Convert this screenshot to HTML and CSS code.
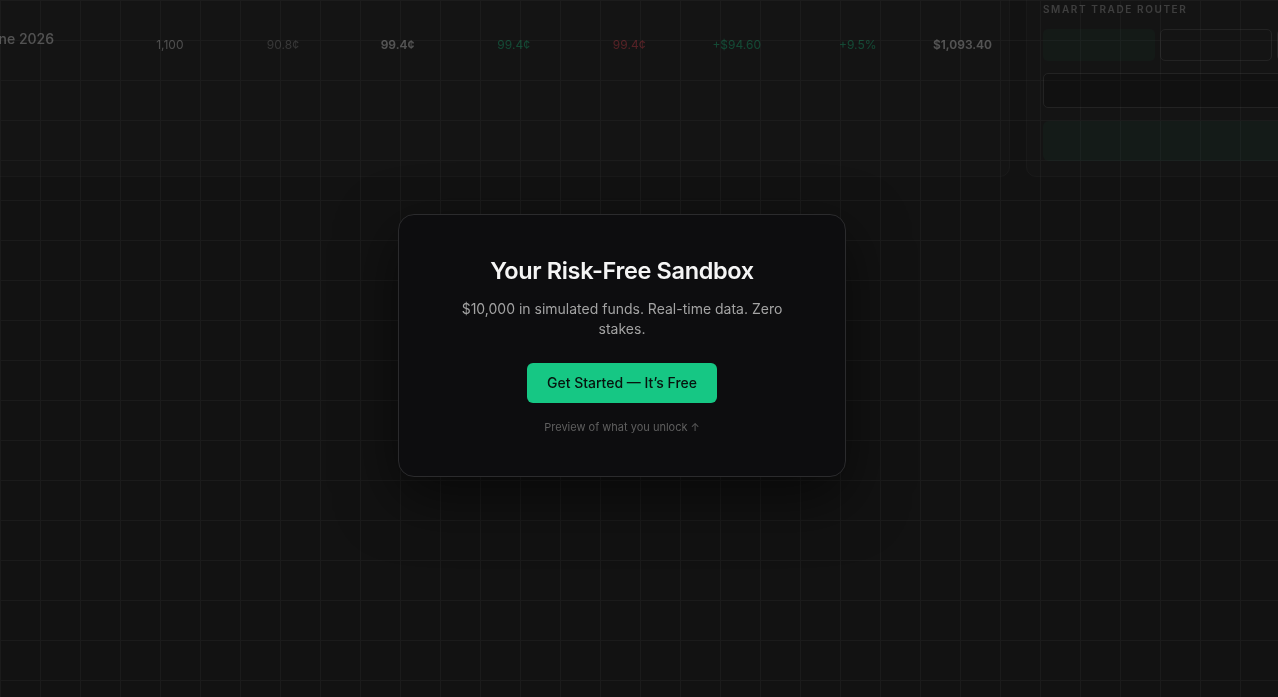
FILE: index.html
```html
<!DOCTYPE html>
<html lang="en">

<head>
    <meta charset="UTF-8">
    <title>Paper Trading — Sandbox</title>
    <link rel="stylesheet" href="styles.css">
</head>

<body>
    <!-- locked preview of the trading desk, shown dimmed behind the gate -->
    <div class="preview" aria-hidden="true">
        <div class="desk">
            <section class="panel positions">
                <div class="pos-row">
                    <div class="pos-name">Fed Rate Cut by June 2026</div>
                    <div class="num">1,100</div>
                    <div class="num muted">90.8¢</div>
                    <div class="num strong">99.4¢</div>
                    <div class="num up">99.4¢</div>
                    <div class="num down">99.4¢</div>
                    <div class="num up">+$94.60</div>
                    <div class="num up">+9.5%</div>
                    <div class="num strong">$1,093.40</div>
                </div>
            </section>

            <aside class="panel router">
                <div class="router-label">Smart Trade Router</div>
                <div class="side-tabs">
                    <div class="side-tab active"></div>
                    <div class="side-tab"></div>
                    <div class="side-tab"></div>
                </div>
                <div class="router-input"></div>
                <div class="router-submit"></div>
            </aside>
        </div>
    </div>

    <div class="gate">
        <div class="gate-card">
            <h1>Your Risk-Free Sandbox</h1>
            <p class="gate-sub">$10,000 in simulated funds. Real-time data. Zero stakes.</p>
            <button class="gate-btn">Get Started — It’s Free</button>
            <p class="gate-hint">Preview of what you unlock ↑</p>
        </div>
    </div>
</body>

</html>
```

FILE: styles.css
```css
* {
    box-sizing: border-box;
}

html,
body {
    height: 100%;
}

body {
    margin: 0;
    overflow: hidden;
    font-family: Inter, 'Noto Sans', sans-serif;
    color: #e5e5e5;
    background-color: #121212;
    /* 40px grid behind everything */
    background-image:
        linear-gradient(#1b1b1b 1px, transparent 1px),
        linear-gradient(90deg, #1b1b1b 1px, transparent 1px);
    background-size: 40px 40px;
}

/* dimmed desk behind the gate */
.preview {
    opacity: 0.3;
    filter: blur(0.4px);
    pointer-events: none;
}

.desk {
    display: grid;
    grid-template-columns: 1040px 380px;
    gap: 16px;
    margin: -15px 0 0 -30px;
}

.panel {
    height: 192px;
    background: rgba(34, 34, 34, 0.55);
    border: 1px solid #2c2c2c;
    border-radius: 10px;
}

.positions {
    padding: 43px 17px 0 0;
}

.pos-row {
    display: grid;
    grid-template-columns: 1fr repeat(8, 115.5px);
    align-items: start;
}

.pos-name {
    font-size: 14px;
    font-weight: 500;
    line-height: 20px;
    white-space: nowrap;
    text-align: right;
    padding-right: 14px;
    direction: rtl;
    overflow: hidden;
    color: #e6e6e6;
}

.num {
    text-align: right;
    font-size: 12px;
    line-height: 16px;
    margin-top: 8px;
    color: #d4d4d4;
}

.num.muted {
    color: #8a8a8a;
}

.num.strong {
    color: #ededed;
    font-weight: 600;
}

.num.up {
    color: #16c784;
}

.num.down {
    color: #ef4452;
}

.router {
    padding: 16px;
}

.router-label {
    font-size: 10px;
    line-height: 14px;
    font-weight: 600;
    letter-spacing: 1.6px;
    text-transform: uppercase;
    color: #a3a3a3;
}

.side-tabs {
    display: flex;
    gap: 5px;
    margin-top: 13px;
}

.side-tab {
    width: 112px;
    height: 32px;
    border: 1px solid #4a4a4a;
    border-radius: 5px;
}

.side-tab.active {
    border-color: transparent;
    background: rgba(22, 199, 132, 0.1);
}

.router-input {
    height: 35px;
    margin-top: 12px;
    border: 1px solid #4a4a4a;
    border-radius: 5px;
    background: #0f0f0f;
}

.router-submit {
    height: 40px;
    margin-top: 13px;
    border-radius: 6px;
    background: rgba(22, 199, 132, 0.13);
}

/* sign-up gate */
.gate {
    position: fixed;
    inset: 0;
    display: flex;
    align-items: center;
    justify-content: center;
    padding: 0 34px 7px 0;
}

.gate-card {
    width: 448px;
    padding: 40px 40px 41px;
    text-align: center;
    background: #0d0d0f;
    border: 1px solid #2b2b2d;
    border-radius: 16px;
    box-shadow: 0 20px 60px rgba(0, 0, 0, 0.55);
}

.gate-card h1 {
    margin: 0;
    font-size: 23.5px;
    line-height: 32px;
    font-weight: 600;
    letter-spacing: -0.35px;
    color: #f5f5f5;
}

.gate-sub {
    max-width: 340px;
    margin: 12px auto 0;
    font-size: 14px;
    line-height: 20px;
    color: #a3a3a3;
}

.gate-btn {
    margin-top: 24px;
    height: 40px;
    padding: 0 20px;
    border: none;
    border-radius: 6px;
    background: #16c784;
    color: #07140e;
    font-family: inherit;
    font-size: 14px;
    font-weight: 500;
    cursor: pointer;
}

.gate-btn:hover {
    background: #13b576;
}

.gate-hint {
    margin: 16px 0 0;
    font-size: 11px;
    line-height: 16px;
    color: #5f5f5f;
}
```
